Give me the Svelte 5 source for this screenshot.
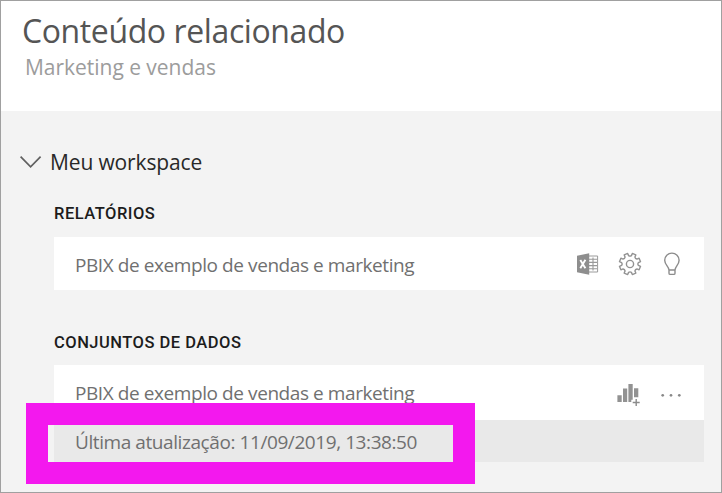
<script>
  const item = 'PBIX de exemplo de vendas e marketing';
  const teeth = 8;
  // Outline of the gear: alternating outer teeth and inner valleys.
  const gear = (() => {
    const at = (r, deg) => {
      const a = (deg * Math.PI) / 180;
      return `${(12 + r * Math.cos(a)).toFixed(2)} ${(12 + r * Math.sin(a)).toFixed(2)}`;
    };
    let d = '';
    for (let i = 0; i < teeth; i++) {
      const c = ((i + 0.5) * 360) / teeth - 90;
      d += `${i ? 'L' : 'M'}${at(10.8, c - 10)}L${at(10.8, c + 10)}L${at(8.5, c + 13)}Q${at(7.4, c + 22.5)} ${at(8.5, c + 32)}`;
    }
    return d + 'Z';
  })();
</script>

<main class="pane">
  <header>
    <h1>Conteúdo relacionado</h1>
    <p>Marketing e vendas</p>
  </header>

  <section class="body">
    <div class="workspace">
      <svg width="22" height="14" viewBox="0 0 22 14"><path d="M.6 1.6 10.6 11.8 20.6 1.6" fill="none" stroke="#606060" stroke-width="1.7" /></svg>
      <span>Meu workspace</span>
    </div>

    <h2>RELATÓRIOS</h2>
    <div class="row report">
      <span class="name">{item}</span>
      <svg class="excel" width="24" height="24" viewBox="0 0 24 24">
        <path d="M12 4H21.6V20H12" fill="#fff" stroke="#9a9a9a" />
        <path d="M13 7.2H21M13 10.4H21M13 13.6H21M13 16.8H21M17 5.5V18.5" stroke="#999" stroke-width="1.1" />
        <path d="M1 3.7 13.2 1.3V22.7L1 20.3Z" fill="#8e8e8e" />
        <path d="M4.3 8 9.4 16.2M9.4 7.8 4.3 16.2" stroke="#fff" stroke-width="1.9" />
      </svg>
      <svg class="gear" width="24" height="24" viewBox="0 0 24 24" fill="none" stroke="#929292" stroke-width="1.4">
        <path d={gear} stroke-linejoin="round" />
        <circle cx="12" cy="12" r="3.6" />
      </svg>
      <svg class="bulb" width="24" height="24" viewBox="0 0 24 24" fill="none" stroke="#8c8c8c" stroke-width="1.4">
        <path d="M9 18C9 14.5 4.7 12.8 4.7 8.2A7.2 7.1 0 0 1 19.1 8.2C19.1 12.8 15 14.5 15 18V21.2Q15 22.4 13.8 22.4H10.2Q9 22.4 9 21.2ZM9 18H15" />
      </svg>
    </div>

    <h2 class="datasets">CONJUNTOS DE DADOS</h2>
    <div class="row dataset">
      <span class="name">{item}</span>
      <svg class="chart" width="24" height="26" viewBox="0 -1 24 26">
        <path d="M1.4 13.2h4.3v6.8H1.4zM7 6.6h4.2V20H7zM12.4 2h4.3v15.8h-1.4V20h-2.9zM18 6.3h4.3v8.9H18z" transform="translate(0 1)" fill="#929292" />
        <path d="M20.2 18.1v6.8M16.7 21.5h7" stroke="#8b8b8b" stroke-width="1.4" />
      </svg>
      <svg class="dots" width="24" height="24" viewBox="0 0 24 24" fill="#888">
        <circle cx="3.7" cy="14.3" r="1.35" /><circle cx="12" cy="14.3" r="1.35" /><circle cx="20.3" cy="14.3" r="1.35" />
      </svg>
    </div>
    <div class="updated">Última atualização: 11/09/2019, 13:38:50</div>
  </section>

  <div class="highlight"></div>
</main>

<style>
  .pane {
    position: relative;
    box-sizing: border-box;
    width: 722px;
    height: 493px;
    overflow: hidden;
    border: 1px solid #a0a0a0;
    background: #f3f3f3;
    font-family: "Open Sans", "Noto Sans", sans-serif;
  }
  header {
    box-sizing: border-box;
    height: 110px;
    padding: 8px 0 0 21px;
    background: #fff;
  }
  h1, h2, p { margin: 0; font-weight: 400; }
  h1 {
    font-size: 32px;
    line-height: 44px;
    letter-spacing: -0.4px;
    color: #555;
  }
  p {
    padding-left: 3px;
    font-size: 21px;
    line-height: 28px;
    letter-spacing: -0.03px;
    color: #9c9c9c;
  }
  .body { padding: 36px 17px 0 53px; }
  .workspace {
    display: flex;
    align-items: center;
    height: 30px;
    margin-left: -34px;
    gap: 8px;
    font-size: 21px;
    letter-spacing: -0.14px;
    color: #282828;
  }
  h2 {
    height: 20px;
    margin: 27px 0 13px;
    font: 500 16.5px/20px "Roboto", sans-serif;
    letter-spacing: 0.5px;
    color: #1c1c1c;
  }
  h2.datasets { margin-top: 43px; margin-bottom: 12px; }
  .row, .updated {
    display: flex;
    align-items: center;
    box-sizing: border-box;
    padding-left: 21px;
    font-size: 19px;
    letter-spacing: -0.42px;
    color: #707070;
    white-space: nowrap;
  }
  .row { background: #fff; }
  .report { height: 53px; padding-right: 20px; }
  .report .name { padding-top: 3px; }
  .dataset { height: 55px; padding-right: 21px; }
  .name { flex: 1; }
  .report .gear, .report .bulb { margin-left: 18px; }
  .dots { margin-left: 19px; }
  .updated {
    height: 42px;
    padding-top: 2px;
    background: #e9e9e9;
  }
  .highlight {
    position: absolute;
    left: 25px;
    top: 402px;
    box-sizing: border-box;
    width: 449px;
    height: 81px;
    border: 22px solid #f318ee;
  }
</style>
